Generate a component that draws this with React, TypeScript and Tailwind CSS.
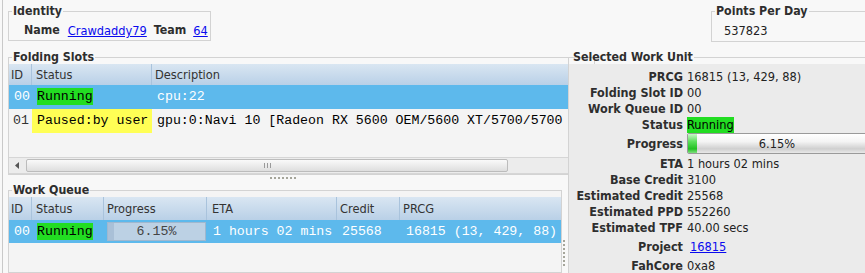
import React from 'react'

const sans = "font-['DejaVu_Sans_Condensed','DejaVu_Sans',sans-serif]"
const mono = "font-['Liberation_Mono','Courier_New',monospace] text-[13.25px]"

const GroupTitle = ({ children }: { children: React.ReactNode }) => (
  <legend className="ml-[3px] px-px text-[12.3px] font-bold leading-[14px] text-[#2e2e2e]">
    {children}
  </legend>
)

const Dots = ({ vertical }: { vertical?: boolean }) => (
  <div className={vertical ? 'flex flex-col gap-[2px]' : 'flex gap-[2px]'}>
    {[0, 1, 2, 3, 4, 5, 6].map((i) => (
      <div key={i} className="h-[2px] w-[2px] bg-[#a5a59a]" />
    ))}
  </div>
)

const TopBar = () => (
  <div className="flex h-[46px] shrink-0 items-start">
    <fieldset className="ml-[5px] mt-[4px] w-[203px] border border-[#d3d3d3]">
      <GroupTitle>Identity</GroupTitle>
      <div className="flex pb-[2px] pl-[15px] pt-[5px] leading-[15px]">
        <b className="text-[12.3px] text-[#2e2e2e]">Name</b>
        <a className="ml-[8px] text-[#0a0aee] underline">Crawdaddy79</a>
        <b className="ml-[7px] text-[12.3px] text-[#2e2e2e]">Team</b>
        <a className="ml-[7px] text-[#0a0aee] underline">64</a>
      </div>
    </fieldset>
    <fieldset className="-mr-[2px] ml-auto mt-[4px] w-[156px] border border-[#d3d3d3]">
      <GroupTitle>Points Per Day</GroupTitle>
      <div className="pb-[3px] pl-[12px] pt-[5px] leading-[15px] text-[#222]">537823</div>
    </fieldset>
  </div>
)

const headerBg = 'bg-[linear-gradient(to_bottom,#d9e6f2,#b9d0e7)]'
const th = 'h-full shrink-0 border-r border-[#a9c3dc] leading-[21px] text-[#333]'

const FoldingSlots = () => (
  <fieldset className="ml-[5px] mt-[4px] w-[554px] border border-[#d3d3d3]">
    <GroupTitle>Folding Slots</GroupTitle>
    <div className={`flex h-[21px] ${headerBg}`}>
      <div className={`${th} w-[23px] pl-[2px]`}>ID</div>
      <div className={`${th} w-[120px] pl-[4px]`}>Status</div>
      <div className="h-full flex-1 pl-[3px] leading-[21px] text-[#333]">Description</div>
    </div>
    <div className={`flex h-[24px] items-center bg-[#5db9ec] ${mono}`}>
      <div className="w-[23px] shrink-0 pl-[5px] text-white">00</div>
      <div className="w-[120px] shrink-0 pl-[5px]">
        <span className="inline-block bg-[#22dd22] leading-[17px] text-black">Running</span>
      </div>
      <div className="pl-[5px] text-white">cpu:22</div>
    </div>
    <div className={`flex h-[24px] bg-[#f4f4f4] ${mono}`}>
      <div className="w-[23px] shrink-0 pl-[4px] leading-[24px] text-[#333]">01</div>
      <div className="w-[120px] shrink-0 bg-[#ffff55] pl-[5px] leading-[24px] text-black">Paused:by user</div>
      <div className="min-w-0 flex-1 overflow-hidden whitespace-nowrap pl-[5px] leading-[24px] text-black">
        gpu:0:Navi 10 [Radeon RX 5600 OEM/5600 XT/5700/5700 XT]
      </div>
    </div>
    <div className="h-[24px] bg-[#f4f4f4]" />
    <div className="flex h-[17px] items-center border-y border-[#d6d6d6] bg-[#ececec]">
      <div className="flex w-[15px] shrink-0 justify-center">
        <svg width="4" height="7" viewBox="0 0 4 7"><path d="M4 0 L0 3.5 L4 7 Z" fill="#555" /></svg>
      </div>
      <div className="ml-[2px] flex h-[13px] w-[482px] items-center justify-center gap-[2px] rounded-[2px] border border-[#bcbcbc] bg-[linear-gradient(to_bottom,#fafafa,#dedede)]">
        <div className="h-[5px] w-px bg-[#9a9a9a]" />
        <div className="h-[5px] w-px bg-[#9a9a9a]" />
        <div className="h-[5px] w-px bg-[#9a9a9a]" />
      </div>
      <div className="flex-1" />
      <div className="flex w-[15px] shrink-0 justify-center">
        <svg width="4" height="7" viewBox="0 0 4 7"><path d="M0 0 L4 3.5 L0 7 Z" fill="#555" /></svg>
      </div>
    </div>
  </fieldset>
)

const WorkQueue = () => (
  <fieldset className="ml-[5px] h-[100px] w-[554px] border border-[#d3d3d3] bg-[#f4f4f4]">
    <GroupTitle>Work Queue</GroupTitle>
    <div className={`flex h-[23px] ${headerBg}`}>
      <div className={`${th} w-[23px] pl-[2px] leading-[23px]`}>ID</div>
      <div className={`${th} w-[72px] pl-[4px] leading-[23px]`}>Status</div>
      <div className={`${th} w-[103px] pl-[3px] leading-[23px]`}>Progress</div>
      <div className={`${th} w-[130px] pl-[5px] leading-[23px]`}>ETA</div>
      <div className={`${th} w-[63px] pl-[3px] leading-[23px]`}>Credit</div>
      <div className="h-full flex-1 pl-[3px] leading-[23px] text-[#333]">PRCG</div>
    </div>
    <div className={`flex h-[23px] items-center bg-[#5db9ec] ${mono}`}>
      <div className="w-[23px] shrink-0 pl-[5px] text-white">00</div>
      <div className="w-[72px] shrink-0 pl-[5px]">
        <span className="inline-block bg-[#22dd22] leading-[17px] text-black">Running</span>
      </div>
      <div className="h-full w-[103px] shrink-0 py-[2px] pl-[3px] pr-px">
        <div className="relative flex h-full items-center justify-center border border-[#9fb8cf] bg-[#bcd1e4] text-[#444]">
          <div className="absolute bottom-0 left-0 top-0 w-[6%] bg-[#a9c0d7]" />
          <span className="relative">6.15%</span>
        </div>
      </div>
      <div className="w-[130px] shrink-0 whitespace-nowrap pl-[6px] text-white">1 hours 02 mins</div>
      <div className="w-[63px] shrink-0 pl-[5px] text-white">25568</div>
      <div className="flex-1 whitespace-nowrap pl-[6px] text-white">16815 (13, 429, 88)</div>
    </div>
  </fieldset>
)

const Label = ({ children, lh }: { children: React.ReactNode; lh?: string }) => (
  <div className={`w-[114px] shrink-0 whitespace-nowrap text-right text-[12.5px] font-bold text-[#2e2e2e] ${lh ?? 'leading-[16px]'}`}>
    {children}
  </div>
)

const Row = ({ label, children, tall }: { label: string; children: React.ReactNode; tall?: boolean }) => (
  <div className={tall ? 'flex h-[22px] items-center' : 'flex h-[16px] items-center'}>
    <Label>{label}</Label>
    <div className="ml-[4px] flex-1 whitespace-nowrap leading-[16px] text-[#222]">{children}</div>
  </div>
)

const SelectedWorkUnit = () => (
  <fieldset className="mt-[4px] h-[240px] w-[300px] shrink-0 border border-[#d3d3d3]">
    <GroupTitle>Selected Work Unit</GroupTitle>
    <div className="h-[220px] bg-[#ebebeb] pt-[5px]">
      <Row label="PRCG">16815 (13, 429, 88)</Row>
      <Row label="Folding Slot ID">00</Row>
      <Row label="Work Queue ID">00</Row>
      <Row label="Status">
        <span className="inline-block bg-[#22dd22] leading-[16px] text-black">Running</span>
      </Row>
      <div className="flex h-[23px] items-start">
        <Label lh="leading-[22px]">Progress</Label>
        <div className="ml-[4px] flex h-[21px] flex-1 overflow-hidden rounded-[2px] border border-[#9a9a9a] bg-[linear-gradient(to_bottom,#ffffff_0%,#f4f4f4_40%,#cfcfcf_78%,#e8e8e8_100%)]">
          <div className="h-full w-[9px] shrink-0 bg-[linear-gradient(to_bottom,#c8f7c8_0%,#5be05b_40%,#22c022_78%,#7ee07e_100%)]" />
          <div className="flex-1 pr-[9px] text-center leading-[19px] text-[#222]">6.15%</div>
        </div>
      </div>
      <Row label="ETA">1 hours 02 mins</Row>
      <Row label="Base Credit">3100</Row>
      <Row label="Estimated Credit">25568</Row>
      <Row label="Estimated PPD">552260</Row>
      <Row label="Estimated TPF">40.00 secs</Row>
      <Row label="Project" tall>
        <a className="ml-[3px] text-[#0a0aee] underline">16815</a>
      </Row>
      <Row label="FahCore">0xa8</Row>
    </div>
  </fieldset>
)

export default function App() {
  return (
    <div className={`h-[273px] w-[865px] overflow-hidden bg-[#f8f8f8] pl-[2px] text-[12.7px] text-[#333] ${sans}`}>
      <div className="flex h-full flex-col border-l border-[#c9c9c9]">
        <TopBar />
        <div className="flex min-h-0 flex-1">
          <div className="flex w-[559px] shrink-0 flex-col">
            <FoldingSlots />
            <div className="h-[8px] shrink-0 pl-[267px] pt-[2px]">
              <Dots />
            </div>
            <WorkQueue />
          </div>
          <div className="w-[6px] shrink-0 pl-px pt-[194px]">
            <Dots vertical />
          </div>
          <SelectedWorkUnit />
        </div>
      </div>
    </div>
  )
}
